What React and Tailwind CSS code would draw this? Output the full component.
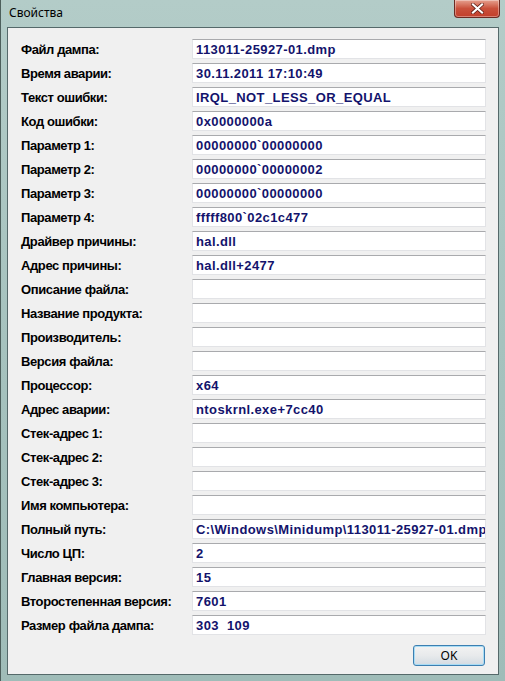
import React from "react";

const rows = [
  ["Файл дампа:", "113011-25927-01.dmp"],
  ["Время аварии:", "30.11.2011 17:10:49"],
  ["Текст ошибки:", "IRQL_NOT_LESS_OR_EQUAL"],
  ["Код ошибки:", "0x0000000a"],
  ["Параметр 1:", "00000000`00000000"],
  ["Параметр 2:", "00000000`00000002"],
  ["Параметр 3:", "00000000`00000000"],
  ["Параметр 4:", "fffff800`02c1c477"],
  ["Драйвер причины:", "hal.dll"],
  ["Адрес причины:", "hal.dll+2477"],
  ["Описание файла:", ""],
  ["Название продукта:", ""],
  ["Производитель:", ""],
  ["Версия файла:", ""],
  ["Процессор:", "x64"],
  ["Адрес аварии:", "ntoskrnl.exe+7cc40"],
  ["Стек-адрес 1:", ""],
  ["Стек-адрес 2:", ""],
  ["Стек-адрес 3:", ""],
  ["Имя компьютера:", ""],
  ["Полный путь:", "C:\\Windows\\Minidump\\113011-25927-01.dmp"],
  ["Число ЦП:", "2"],
  ["Главная версия:", "15"],
  ["Второстепенная версия:", "7601"],
  ["Размер файла дампа:", "303\u00a0\u00a0109"],
];

export default function App() {
  return (
    <div
      className="relative w-[505px] h-[681px] overflow-hidden bg-gradient-to-b from-[#b3ccc8] via-[#a6c2be] to-[#9fbcb8] border-l border-[#4d5f5c]"
      style={{ fontFamily: '"Liberation Sans", Arial, sans-serif' }}
    >
      <div className="h-[27px] flex items-center pl-[8px] pb-[1px]">
        <span className="text-[12px] text-black" style={{ fontFamily: '"Noto Sans", "DejaVu Sans", sans-serif' }}>Свойства</span>
      </div>
      <div className="absolute top-0 right-[5px] w-[46px] h-[18px] rounded-b-[4px] border border-t-0 border-[#6b2a22] bg-gradient-to-b from-[#e5a08f] via-[#c9503b] to-[#c23f2b] flex items-center justify-center shadow-[inset_0_0_0_1px_rgba(255,255,255,0.35)]">
        <svg width="13" height="11" viewBox="0 0 13 11">
          <path d="M2 1.5 L11 9.5 M11 1.5 L2 9.5" stroke="#5a1a12" strokeWidth="3.6" strokeLinecap="square" />
          <path d="M2 1.5 L11 9.5 M11 1.5 L2 9.5" stroke="#ffffff" strokeWidth="2.2" strokeLinecap="square" />
        </svg>
      </div>
      <div className="ml-[6px] w-[492px] h-[648px] border border-[#55696a] bg-[#f0f0f0] flex flex-col pt-[11px] pl-[13px] pr-[12px]">
        <div className="flex flex-col gap-[4px]">
          {rows.map(([label, value]) => (
            <div key={label} className="flex items-center h-[20px]">
              <div className="w-[171px] shrink-0 text-[13px] font-bold text-black leading-none whitespace-nowrap tracking-[-0.4px]">{label}</div>
              <div className="flex-1 h-[20px] bg-white border border-[#e2e3e6] border-t-[#a9aaad] flex items-center pl-[3px] overflow-hidden">
                <span className="text-[13px] font-bold text-[#13136c] leading-none whitespace-nowrap tracking-[0.4px]">{value}</span>
              </div>
            </div>
          ))}
        </div>
        <div className="flex justify-end mt-[10px] pr-[1px]">
          <div className="w-[72px] h-[21px] rounded-[3px] border border-[#3c7fb1] bg-gradient-to-b from-[#f2f2f2] via-[#e8eaec] to-[#d3dbe2] shadow-[inset_0_0_0_1px_#a8dcf5] flex items-center justify-center">
            <span className="text-[12px] text-black" style={{ fontFamily: '"Noto Sans", "DejaVu Sans", sans-serif' }}>OK</span>
          </div>
        </div>
      </div>
    </div>
  );
}
